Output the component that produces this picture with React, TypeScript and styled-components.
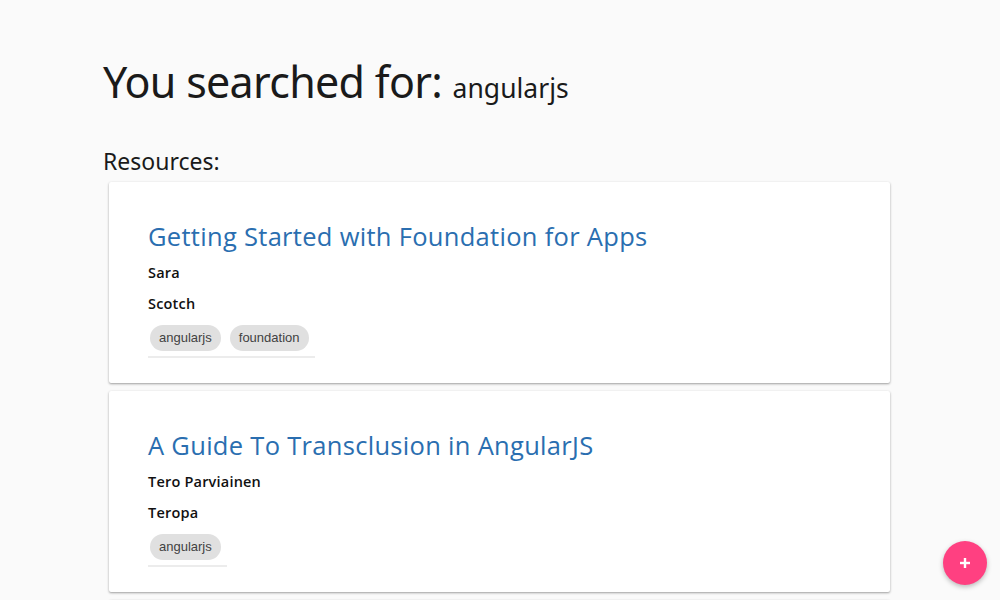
import React from "react";
import styled, { createGlobalStyle } from "styled-components";

const Global = createGlobalStyle`
  html, body { margin: 0; padding: 0; background: #fafafa; }
  body { font-family: "Noto Sans", "Open Sans", sans-serif; overflow: hidden; }
`;

const Page = styled.main`
  width: 1000px;
  height: 600px;
  box-sizing: border-box;
  padding: 56px 0 0 103px;
  overflow: hidden;
  position: relative;
`;

const Heading = styled.h1`
  margin: 0;
  font-family: "Noto Sans", sans-serif;
  font-weight: 400;
  font-size: 43px;
  line-height: 52px;
  color: #1a1a1a;
  letter-spacing: -0.7px;
`;

const Query = styled.span`
  font-size: 26.5px;
  letter-spacing: 0;
`;

const SubHeading = styled.h2`
  margin: 33px 0 0 0;
  font-family: "Noto Sans", sans-serif;
  font-weight: 400;
  font-size: 23px;
  line-height: 28px;
  color: #1a1a1a;
`;

const List = styled.div`
  display: flex;
  flex-direction: column;
  gap: 8px;
  margin: 7px 0 0 6px;
  width: 781px;
`;

const Card = styled.article`
  background: #fff;
  height: 201px;
  box-sizing: border-box;
  padding: 38px 39px 0 39px;
  border-radius: 2px;
  box-shadow: 0 1px 3px rgba(0, 0, 0, 0.18), 0 1px 2px rgba(0, 0, 0, 0.22);
  display: flex;
  flex-direction: column;
  align-items: flex-start;
`;

const Title = styled.h3`
  margin: 0;
  font-family: "Open Sans", sans-serif;
  font-weight: 500;
  font-size: 25.5px;
  line-height: 32px;
  color: #2a6eb0;
  letter-spacing: 0.3px;
`;

const Meta = styled.p`
  margin: 10px 0 0 0;
  font-family: "Open Sans", sans-serif;
  font-weight: 600;
  font-size: 14.5px;
  line-height: 22px;
  color: #111;
  letter-spacing: 0.2px;
  & + & { margin-top: 9px; }
`;

const Chips = styled.div`
  display: flex;
  gap: 9px;
  margin-top: 10px;
  padding: 0 6px 5px 2px;
  border-bottom: 2px solid #ececec;
`;

const Chip = styled.span`
  height: 26px;
  line-height: 26px;
  padding: 0 9px;
  border-radius: 13px;
  background: #e0e0e0;
  color: #424242;
  font-family: "Liberation Sans", Arial, sans-serif;
  font-size: 13px;
`;

const Fab = styled.button`
  position: absolute;
  left: 943px;
  top: 541px;
  width: 44px;
  height: 44px;
  border-radius: 50%;
  border: none;
  background: #ff4081;
  box-shadow: 0 2px 5px rgba(0, 0, 0, 0.26);
  display: flex;
  align-items: center;
  justify-content: center;
  padding: 0;
`;

type Resource = { title: string; author: string; site: string; tags: string[] };

const resources: Resource[] = [
  { title: "Getting Started with Foundation for Apps", author: "Sara", site: "Scotch", tags: ["angularjs", "foundation"] },
  { title: "A Guide To Transclusion in AngularJS", author: "Tero Parviainen", site: "Teropa", tags: ["angularjs"] },
];

export default function App() {
  return (
    <>
      <Global />
      <Page>
        <Heading>
          You searched for: <Query>angularjs</Query>
        </Heading>
        <SubHeading>Resources:</SubHeading>
        <List>
          {resources.map((r, i) => (
            <Card key={i}>
              <Title>{r.title}</Title>
              <Meta>{r.author}</Meta>
              <Meta>{r.site}</Meta>
              <Chips>
                {r.tags.map((t) => (
                  <Chip key={t}>{t}</Chip>
                ))}
              </Chips>
            </Card>
          ))}
          <Card aria-hidden="true" />
        </List>
        <Fab aria-label="add">
          <svg width="10" height="10" viewBox="0 0 10 10">
            <rect x="3.8" y="0" width="2.4" height="10" fill="#fff" />
            <rect x="0" y="3.8" width="10" height="2.4" fill="#fff" />
          </svg>
        </Fab>
      </Page>
    </>
  );
}
